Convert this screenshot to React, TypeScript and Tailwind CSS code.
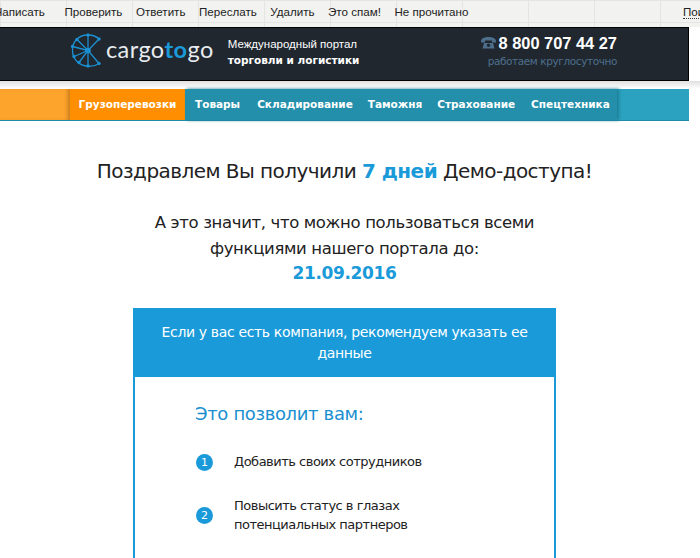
const Wheel = () => (
  <svg width="34" height="35" viewBox="0 0 34 34" fill="none" stroke="#1c8fd0" strokeWidth="1.3">
    <path d="M28 5.5 A15.5 15.5 0 0 0 17 1.5 A15.5 15.5 0 0 0 5 6.5 A15.5 15.5 0 0 0 1.5 17 A15.5 15.5 0 0 0 6 28 A15.5 15.5 0 0 0 17 32.5 A15.5 15.5 0 0 0 28 30" />
    <path d="M17 17 L28 5.5 M17 17 L17 1.5 M17 17 L6 6 M17 17 L1.5 13 M17 17 L3 23 M17 17 L8 29 M17 17 L17 32.5 M17 17 L28 30" />
    <circle cx="17" cy="17" r="2.8" fill="#1c8fd0" stroke="none" />
    {[[28,5.5],[17,1.5],[6,6],[1.5,13],[3,23],[8,29],[17,32.5],[28,30]].map(([x,y],i)=>(
      <circle key={i} cx={x} cy={y} r="1.7" fill="#1c8fd0" stroke="none" />
    ))}
  </svg>
);

const Phone = () => (
  <svg width="15" height="12" viewBox="0 0 15 12" fill="#4e6f8c">
    <path d="M0 4.5 C0 1 4 0 7.5 0 C11 0 15 1 15 4.5 L15 5.5 L11 5.5 L11 3.5 L4 3.5 L4 5.5 L0 5.5 Z" />
    <path d="M3 6 L12 6 L13.5 11.5 L1.5 11.5 Z" />
    <circle cx="7.5" cy="8.3" r="1.7" fill="#20272f" />
  </svg>
);

const toolbar = ["Проверить", "Ответить", "Переслать", "Удалить", "Это спам!", "Не прочитано"];

const Step = ({ n, children }: { n: number; children: React.ReactNode }) => (
  <div className="flex items-center">
    <div className="w-[17px] h-[17px] mt-[2px] rounded-full bg-[#1a9ad9] text-white text-[11px] leading-[17px] text-center shrink-0">{n}</div>
    <div className="ml-[21px] text-[13px] leading-[19px] tracking-[-0.5px] text-[#222]">{children}</div>
  </div>
);

export default function App() {
  return (
    <div className="w-[700px] h-[558px] overflow-hidden bg-white font-['DejaVu_Sans','Noto_Sans',sans-serif]">
      <div className="h-[27px] pb-[3px] bg-[#f2f2f0] bg-[linear-gradient(#e4e4e2_1px,transparent_1px),linear-gradient(90deg,#e4e4e2_1px,transparent_1px)] bg-[length:66px_22px] flex items-center text-[11.6px] text-[#222] font-['Liberation_Sans',sans-serif] whitespace-nowrap">
        <div className="ml-[-6px] flex gap-[13.5px] flex-1">
          <span className="mr-[6px]">Написать</span>
          {toolbar.map((t) => <span key={t}>{t}</span>)}
        </div>
        <span className="mr-[-1px] w-[18px] overflow-hidden border-b border-dotted border-[#333] leading-[13px]">Поиск</span>
      </div>
      <div className="w-[689px] h-[54px] pb-[8px] bg-[#20272f] border-y border-r border-black flex items-center pl-[71px]">
        <Wheel />
        <div className="ml-[1px] text-[23.5px] text-[#e8ecef] tracking-[0.4px] font-['Lato',sans-serif]">
          cargo<span className="text-[#1a9ad9] font-bold">to</span>go
        </div>
        <div className="ml-[14px] mt-[4px] text-[11.5px] leading-[16px] text-white font-['Liberation_Sans',sans-serif]">
          <div>Международный портал</div>
          <div className="font-bold font-['DejaVu_Sans',sans-serif] text-[10.5px]">торговли и логистики</div>
        </div>
        <div className="ml-auto mr-[71px] flex flex-col items-end">
          <div className="flex items-center gap-[3px] text-white font-bold text-[16.4px] leading-[22px] font-['Liberation_Sans',sans-serif]">
            <Phone />
            <span>8 800 707 44 27</span>
          </div>
          <div className="text-[10.5px] leading-[15px] tracking-[-0.4px] text-[#4e6f8c]">работаем круглосуточно</div>
        </div>
      </div>
      <div className="h-[8px] bg-[linear-gradient(#e0e0e0,#ffffff)]" />
      <div className="w-[689px] h-[32px] flex bg-[#2ba3c0] border-b border-[#1d8ca8] text-white text-[10.5px] font-bold">
        <div className="w-[70px] bg-[#fda42c] shadow-[inset_-4px_0_4px_-2px_#c47a1c]" />
        <div className="w-[115px] bg-[#ff8f00] flex items-center justify-center">Грузоперевозки</div>
        <div className="w-[432px] bg-[#238fab] flex items-center gap-[15px] pl-[10px] shadow-[2px_0_3px_#1d7d96]">
          <span className="mr-[2px]">Товары</span>
          <span>Складирование</span>
          <span>Таможня</span>
          <span>Страхование</span>
          <span className="ml-[1px]">Спецтехника</span>
        </div>
      </div>
      <div className="w-[689px] text-center text-[#222] mt-[35px]">
        <div className="text-[20px] leading-[30px] tracking-[-0.55px]">
          Поздравлем Вы получили <span className="font-bold text-[#1a9ad9]">7 дней</span> Демо-доступа!
        </div>
        <div className="mt-[24px] text-[16.5px] leading-[25.5px] tracking-[-0.36px]">
          <div>А это значит, что можно пользоваться всеми</div>
          <div>функциями нашего портала до:</div>
          <div className="font-bold text-[#1a9ad9] text-[17px]">21.09.2016</div>
        </div>
      </div>
      <div className="w-[423px] ml-[133px] mt-[21px]">
        <div className="h-[69px] pt-[2px] bg-[#1a9ad9] text-white text-[14px] leading-[21px] tracking-[-0.35px] text-center px-[20px] flex items-center justify-center">
          Если у вас есть компания, рекомендуем указать ее данные
        </div>
        <div className="border-x-2 border-[#1a9ad9] pl-[60px] pt-[23px] h-[200px]">
          <div className="text-[18px] leading-[28px] tracking-[-0.35px] text-[#1a8fd0]">Это позволит вам:</div>
          <div className="mt-[24px] ml-[1px] flex flex-col gap-[25px]">
            <Step n={1}>Добавить своих сотрудников</Step>
            <Step n={2}>Повысить статус в глазах<br />потенциальных партнеров</Step>
            <Step n={3}>Пройти верификацию<br />компании</Step>
          </div>
        </div>
      </div>
    </div>
  );
}
